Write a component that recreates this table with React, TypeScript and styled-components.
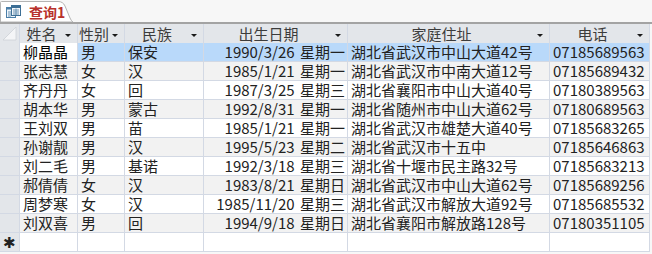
import React from "react";
import styled, { createGlobalStyle } from "styled-components";

const GlobalStyle = createGlobalStyle`
  html, body { margin: 0; padding: 0; background: #ffffff; }
  * { box-sizing: border-box; }
`;

type Row = {
  name: string;
  sex: string;
  nation: string;
  date: string;
  week: string;
  addr: string;
  phone: string;
};

const rows: Row[] = [
  { name: "柳晶晶", sex: "男", nation: "保安", date: "1990/3/26", week: "星期一", addr: "湖北省武汉市中山大道42号", phone: "07185689563" },
  { name: "张志慧", sex: "女", nation: "汉", date: "1985/1/21", week: "星期一", addr: "湖北省武汉市中南大道12号", phone: "07185689432" },
  { name: "齐丹丹", sex: "女", nation: "回", date: "1987/3/25", week: "星期三", addr: "湖北省襄阳市中山大道40号", phone: "07180389563" },
  { name: "胡本华", sex: "男", nation: "蒙古", date: "1992/8/31", week: "星期一", addr: "湖北省随州市中山大道62号", phone: "07180689563" },
  { name: "王刘双", sex: "男", nation: "苗", date: "1985/1/21", week: "星期一", addr: "湖北省武汉市雄楚大道40号", phone: "07185683265" },
  { name: "孙谢靓", sex: "男", nation: "汉", date: "1995/5/23", week: "星期二", addr: "湖北省武汉市十五中", phone: "07185646863" },
  { name: "刘二毛", sex: "男", nation: "基诺", date: "1992/3/18", week: "星期三", addr: "湖北省十堰市民主路32号", phone: "07185683213" },
  { name: "郝倩倩", sex: "女", nation: "汉", date: "1983/8/21", week: "星期日", addr: "湖北省武汉市中山大道62号", phone: "07185689256" },
  { name: "周梦寒", sex: "女", nation: "汉", date: "1985/11/20", week: "星期三", addr: "湖北省武汉市解放大道92号", phone: "07185685532" },
  { name: "刘双喜", sex: "男", nation: "回", date: "1994/9/18", week: "星期日", addr: "湖北省襄阳市解放路128号", phone: "07180351105" },
];

const headers = ["姓名", "性别", "民族", "出生日期", "家庭住址", "电话"];

const Page = styled.div`
  width: 652px;
  height: 254px;
  overflow: hidden;
  background: #f7f7f7;
  font-family: "Noto Sans CJK SC", "Noto Sans", sans-serif;
  display: flex;
  flex-direction: column;
`;

const TabBar = styled.div`
  height: 24px;
  display: flex;
  align-items: flex-end;
  border-bottom: 2px solid #a3a3a3;
  background: #f7f7f7;
`;

const Tab = styled.div`
  position: relative;
  width: 73px;
  height: 21px;
  display: flex;
  align-items: center;
  gap: 8px;
  padding-left: 6px;
`;

const TabShape = styled.svg`
  position: absolute;
  left: 0;
  top: 0;
  z-index: 0;
`;

const TabIcon = styled.svg`
  position: relative;
  z-index: 1;
  flex: none;
`;

const TabLabel = styled.span`
  position: relative;
  z-index: 1;
  color: #b8322c;
  font-weight: bold;
  font-size: 14px;
  line-height: 16px;
`;

const Grid = styled.div`
  display: grid;
  grid-template-columns: 19px 57px 46px 78px 143px 201px 99px;
  grid-auto-rows: 18px;
  gap: 1px;
  background: #d3d9e4;
  border-right: 1px solid #d3d9e4;
  border-bottom: 1px solid #d3d9e4;
  width: 650px;
  font-size: 15px;
`;

const HeaderCell = styled.div`
  position: relative;
  background: #e3e6ea;
  color: #3c3c3c;
  height: 19px;
  line-height: 19px;
  padding-right: 14px;
  text-align: center;
  white-space: nowrap;
  overflow: hidden;
`;

const Corner = styled.div`
  background: #e3e6ea;
  height: 19px;
  position: relative;
`;

const HeaderRowSpacer = styled.div`
  display: contents;
`;

const Arrow = styled.span`
  position: absolute;
  right: 6px;
  top: 10px;
  width: 0;
  height: 0;
  border-left: 3px solid transparent;
  border-right: 3px solid transparent;
  border-top: 3px solid #1a1a1a;
`;

const Selector = styled.div`
  background: #e3e6ea;
  color: #222;
  font-size: 15px;
  line-height: 18px;
  text-align: center;
`;

const Cell = styled.div<{ $bg: string; $align?: "left" | "right"; $strong?: boolean }>`
  background: ${(p) => p.$bg};
  color: ${(p) => (p.$strong ? "#000" : "#222")};
  line-height: 18px;
  text-align: ${(p) => p.$align ?? "left"};
  padding: 0 ${(p) => (p.$align === "right" ? "2px" : "0")} 0 3px;
  white-space: nowrap;
  overflow: hidden;
`;

const DateText = styled.span`
  word-spacing: 2px;
`;

export default function App() {
  return (
    <>
      <GlobalStyle />
      <Page>
        <TabBar>
          <Tab>
            <TabShape width="73" height="21" viewBox="0 0 73 21">
              <path d="M0.5 21 V1.5 Q0.5 0.5 1.5 0.5 H58 Q63 0.5 65 5 L70 17 Q71.5 20.5 73 21 Z" fill="#ffffff" stroke="#b4b4b4" strokeWidth="1" />
            </TabShape>
            <TabIcon width="15" height="13" viewBox="0 0 15 13">
              <rect x="0.5" y="2.5" width="9" height="10" fill="#eef5fb" stroke="#4b7fa8" />
              <rect x="0.5" y="2.5" width="9" height="2" fill="#4b7fa8" />
              <rect x="5.5" y="0.5" width="9" height="10" fill="#f4f8fb" stroke="#3d6f95" />
              <rect x="5.5" y="0.5" width="9" height="2.5" fill="#3d6f95" />
              <path d="M7 5 H13 M7 7 H13 M7 9 H13 M10 3.5 V10" stroke="#6b93b3" strokeWidth="1" />
              <path d="M2 7 H5 M2 9 H5 M2 11 H5" stroke="#6b93b3" strokeWidth="1" />
            </TabIcon>
            <TabLabel>查询1</TabLabel>
          </Tab>
        </TabBar>
        <Grid>
          <HeaderRowSpacer>
            <Corner>
              <svg width="19" height="19" viewBox="0 0 19 19" style={{ display: "block" }}>
                <path d="M3 16 L16 3 L16 16 Z" fill="#f4f5f7" stroke="#cdd1d7" strokeWidth="0.8" />
              </svg>
            </Corner>
            {headers.map((h) => (
              <HeaderCell key={h}>
                {h}
                <Arrow />
              </HeaderCell>
            ))}
          </HeaderRowSpacer>
          {rows.map((r, i) => {
            const bg = i === 0 ? "#b9d9fa" : i % 2 === 1 ? "#f2f2f2" : "#ffffff";
            return (
              <React.Fragment key={r.name}>
                <Selector />
                <Cell $bg={i === 0 ? "#ffffff" : bg} $strong={i === 0}>{r.name}</Cell>
                <Cell $bg={bg}>{r.sex}</Cell>
                <Cell $bg={bg}>{r.nation}</Cell>
                <Cell $bg={bg} $align="right">
                  <DateText>{r.date} {r.week}</DateText>
                </Cell>
                <Cell $bg={bg}>{r.addr}</Cell>
                <Cell $bg={bg}>{r.phone}</Cell>
              </React.Fragment>
            );
          })}
          <Selector>✱</Selector>
          <Cell $bg="#ffffff" />
          <Cell $bg="#ffffff" />
          <Cell $bg="#ffffff" />
          <Cell $bg="#ffffff" />
          <Cell $bg="#ffffff" />
          <Cell $bg="#ffffff" />
        </Grid>
      </Page>
    </>
  );
}
